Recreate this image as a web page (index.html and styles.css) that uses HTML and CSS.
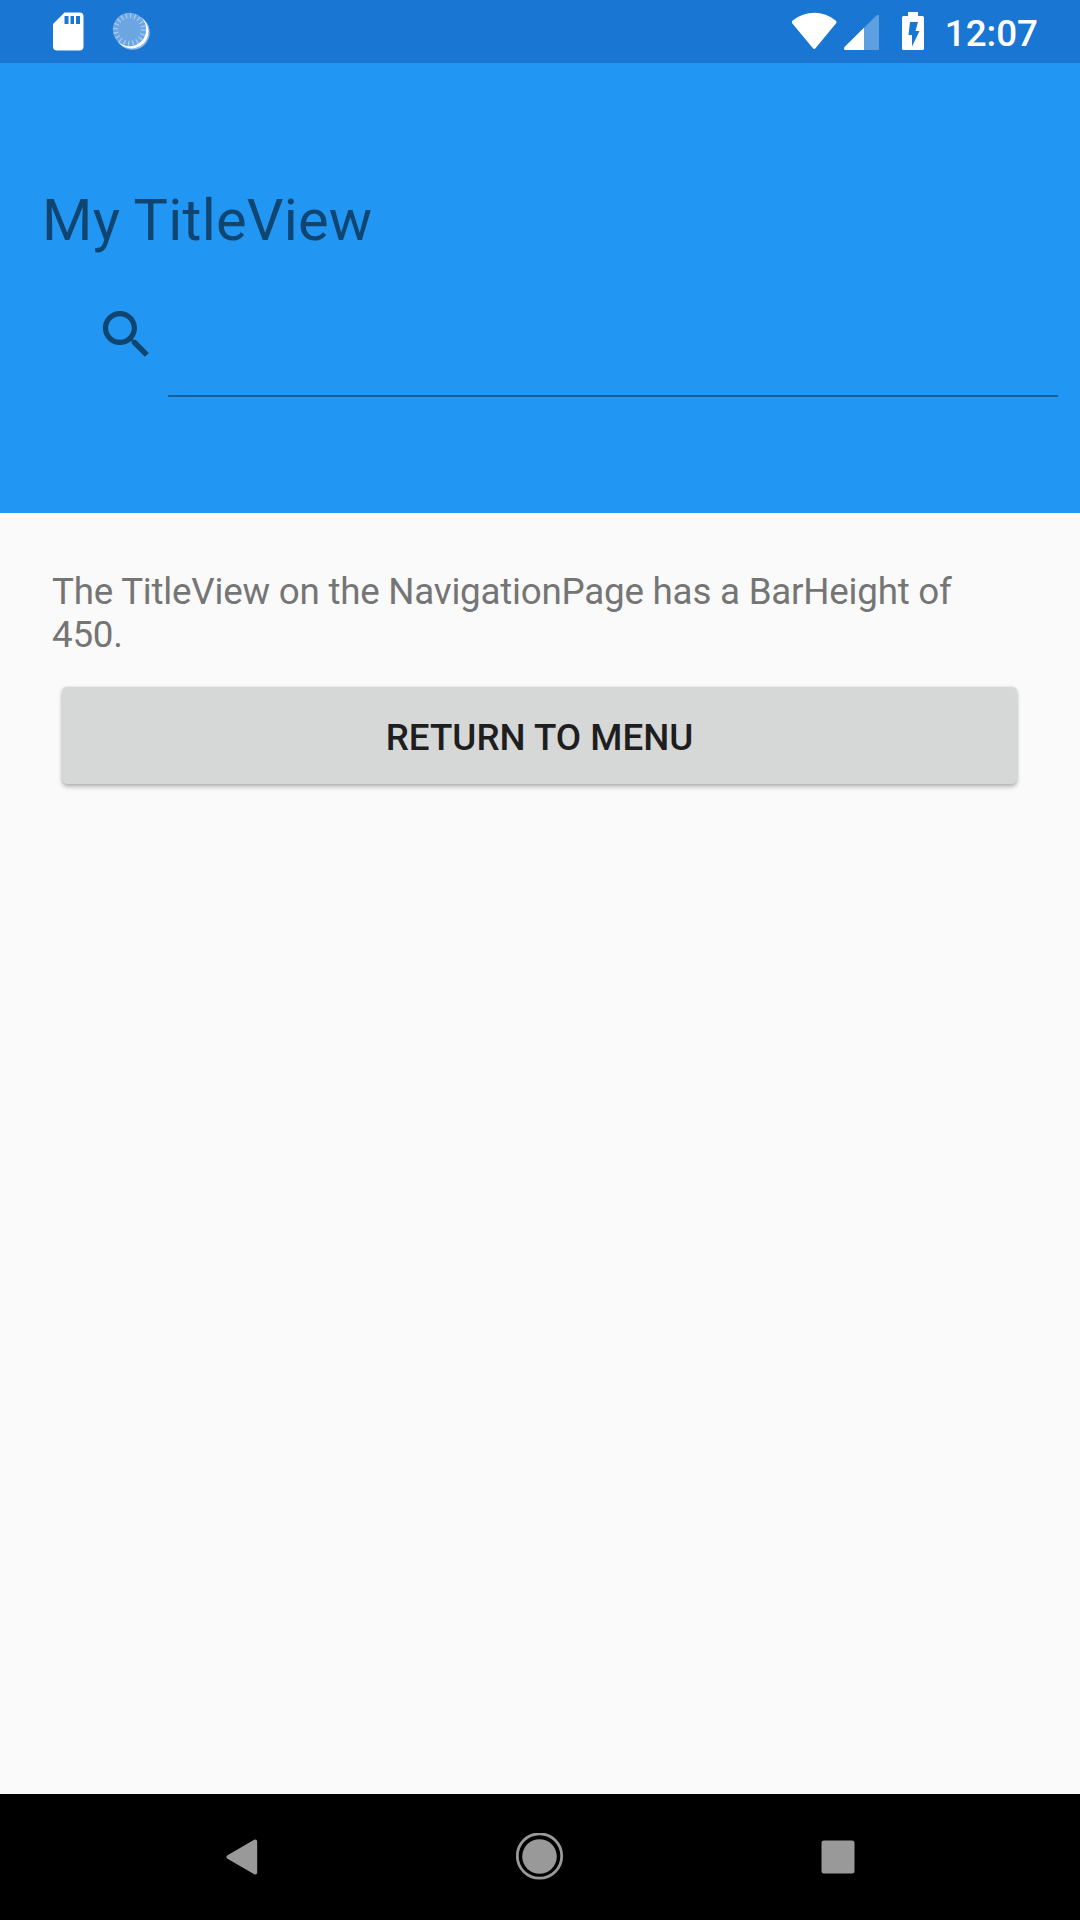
FILE: index.html
```html
<!DOCTYPE html>
<html lang="en">
<head>
<meta charset="utf-8">
<title>My TitleView</title>
<link rel="stylesheet" href="styles.css">
</head>
<body>
<div class="screen">
  <div class="status-bar">
    <svg class="status-left" width="130" height="63" viewBox="0 0 130 63">
      <path fill="#fff" fill-rule="evenodd" d="M24.500 12.500H39.500Q43.500 12.500 43.500 16.500V46.500Q43.500 50.500 39.500 50.500H17Q13 50.500 13 46.500V24ZM24.500 16V24H28.500V16ZM30.500 16V24H34V16ZM36 16V24H40V16Z"/>
      <circle cx="92.500" cy="32.500" r="17.300" fill="#8bb9e8"/>
      <circle cx="91.500" cy="31.500" r="16.900" fill="#fff"/>
      <circle cx="89.500" cy="29.500" r="16.700" fill="#6ca6e2"/>
      <circle cx="89.500" cy="29.500" r="13.800" fill="none" stroke="#a5c8ed" stroke-width="5" stroke-dasharray="1.400 2.935"/>
    </svg>
    <div class="status-right">
      <svg width="144" height="63" viewBox="0 0 144 63">
        <path fill="#fff" d="M.2 23.200Q-1 22 .4 20.800C13.400 10 31.400 10 43.900 20.800Q45.300 22 44.100 23.200L23.700 48Q22.200 49.800 20.700 48Z"/>
        <path fill="#fff" fill-opacity=".3" d="M52.500 50H87V15.800Q86.300 14.200 84.700 15.200L52.700 46.700Q51.500 49.500 53.500 50Z"/>
        <path fill="#fff" d="M72 27.700L52.800 46.700Q51 49.500 53.500 50H72Z"/>
        <path fill="#fff" fill-rule="evenodd" d="M116 12H126V16H130.500Q132 16 132 17.500V48.500Q132 50 130.500 50H111.500Q110 50 110 48.500V17.500Q110 16 111.500 16H116ZM118 22L116.500 35H120V46.500L127.500 31H123.500L126 22Z"/>
      </svg>
      <span class="clock">12:07</span>
    </div>
  </div>
  <header class="title-bar">
    <h1 class="title">My TitleView</h1>
    <div class="search">
      <svg class="search-icon" width="63" height="63" viewBox="0 0 24 24"><path d="M15.500 14h-.79l-.28-.27C15.410 12.590 16 11.110 16 9.500 16 5.910 13.090 3 9.500 3S3 5.910 3 9.500 5.910 16 9.500 16c1.610 0 3.090-.59 4.230-1.570l.27.28v.79l5 4.990L20.490 19l-4.990-5zm-6 0C7.010 14 5 11.990 5 9.500S7.010 5 9.500 5 14 7.010 14 9.500 11.990 14 9.500 14z"/></svg>
      <div class="search-field"></div>
    </div>
  </header>
  <main class="content">
    <p class="message">The TitleView on the NavigationPage has a BarHeight of 450.</p>
    <button class="menu-button">RETURN TO MENU</button>
  </main>
  <nav class="nav-bar">
    <svg width="48" height="48" viewBox="0 0 48 48"><path fill="#999" stroke="#999" stroke-width="4" stroke-linejoin="round" d="M11.500 24L38.200 8.500V39.500Z"/></svg>
    <svg width="48" height="48" viewBox="0 0 48 48"><circle cx="23.500" cy="23" r="22.200" fill="none" stroke="#999" stroke-width="2.800"/><circle cx="23.500" cy="23.500" r="17.300" fill="#999"/></svg>
    <svg width="48" height="48" viewBox="0 0 48 48"><rect x="6.500" y="7.500" width="33" height="33" rx="2.500" fill="#999"/></svg>
  </nav>
</div>
</body>
</html>
```
FILE: styles.css
```css
body {
  margin: 0;
  font-family: Roboto, sans-serif;
}

.screen {
  display: flex;
  flex-direction: column;
  width: 1080px;
  height: 1920px;
  background: #fafafa;
}

.status-bar {
  display: flex;
  justify-content: space-between;
  height: 63px;
  padding: 0 42px 0 40px;
  background: #1976d2;
}

.status-right {
  display: flex;
  gap: 9px;
}

.clock {
  color: #fff;
  font-size: 36.75px;
  font-weight: 500;
  line-height: 68px;
}

.title-bar {
  box-sizing: border-box;
  height: 450px;
  padding: 123px 22px 0 42px;
  background: #2196f3;
}

.title {
  margin: 0;
  color: rgba(0, 0, 0, 0.54);
  font-size: 57.75px;
  font-weight: 400;
  letter-spacing: 0.22px;
  line-height: 68px;
}

.search {
  display: flex;
  gap: 10px;
  padding: 49px 0 0 53px;
}

.search-icon {
  fill: rgba(0, 0, 0, 0.54);
}

.search-field {
  flex: 1;
  height: 92px;
  border-bottom: 2px solid rgba(0, 0, 0, 0.36);
}

.content {
  flex: 1;
  padding: 57px 52px 0;
}

.message {
  margin: 0 0 31px;
  color: #757575;
  font-size: 36.75px;
  letter-spacing: -0.23px;
  line-height: 43px;
}

.menu-button {
  display: block;
  width: 955px;
  height: 97px;
  margin: 0 10px;
  padding: 4px 0 0;
  border: 0;
  border-radius: 5px;
  background: #d6d7d7;
  box-shadow: 0 3px 4px rgba(0, 0, 0, 0.25), 0 0 3px rgba(0, 0, 0, 0.12);
  color: #1e1e1e;
  font: 500 36.75px Roboto, sans-serif;
}

.nav-bar {
  display: flex;
  justify-content: center;
  align-items: center;
  gap: 251px;
  height: 126px;
  background: #000;
}
```
